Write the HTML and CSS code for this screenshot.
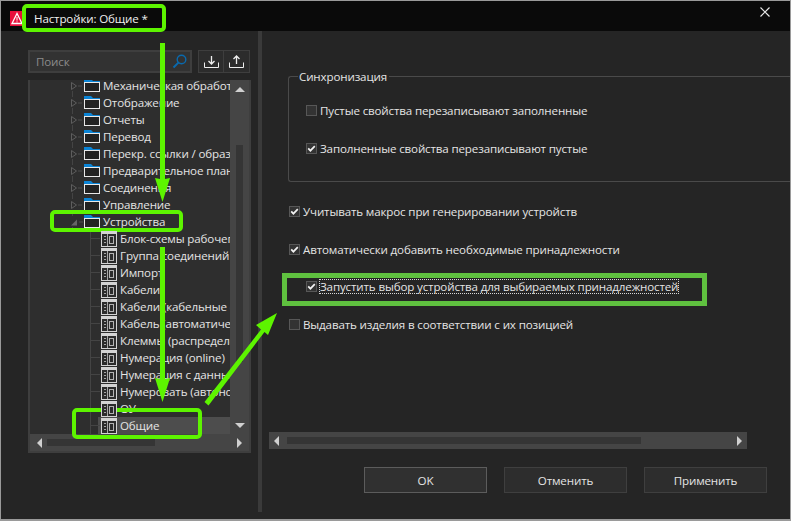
FILE: index.html
```html
<!DOCTYPE html>
<html lang="ru">
<head>
<meta charset="utf-8">
<title>Настройки: Общие *</title>
<link rel="stylesheet" href="styles.css">
</head>
<body>
<svg class="defs" width="0" height="0" aria-hidden="true">
  <symbol id="folder" viewBox="0 0 17 14">
    <path d="M0 0h7l2 2h7v2H0z" fill="#0a84d6"/>
    <rect x=".5" y="3.5" width="15" height="9" fill="#222" stroke="#e8e8e8"/>
  </symbol>
  <symbol id="closed" viewBox="0 0 14 14">
    <path d="M1.500 3.500v7l5-3.500z" fill="none" stroke="#5e5e5e"/>
    <path d="M8 7h4" stroke="#4c4c4c"/>
  </symbol>
  <symbol id="opened" viewBox="0 0 14 14">
    <path d="M1 10.500h6v-6z" fill="#666"/>
    <path d="M9 7h4" stroke="#4c4c4c"/>
  </symbol>
  <symbol id="form" viewBox="0 0 17 16">
    <rect width="16" height="16" fill="#d4d4d4"/>
    <rect x="1" y="3" width="14" height="12" fill="#2c2c2c"/>
    <path d="M3 5h2v1H3zM3 8h2v1H3zM3 11h2v1H3z" fill="#a8a8a8"/>
    <rect x="6" y="3" width="1" height="12" fill="#a8a8a8"/>
    <rect x="8.500" y="5.500" width="4" height="7" fill="none" stroke="#b4b4b4"/>
  </symbol>
  <symbol id="tick" viewBox="0 0 11 11">
    <path d="M2.200 5.400 4.400 7.700 8.800 3.200" fill="none" stroke="#f2f2f2" stroke-width="1.700"/>
  </symbol>
</svg>

<div class="window">
  <header class="titlebar">
    <svg class="logo" width="15" height="15" viewBox="0 0 15 15">
      <rect width="15" height="15" fill="#e8103c"/>
      <path d="M7 2.500 2 12.500h10z" fill="none" stroke="#fff" stroke-width="1.300"/>
      <path d="M7 6v3.600M7 10.400v1" stroke="#fff"/>
    </svg>
    <span class="title">Настройки: Общие *</span>
    <svg class="close" width="10" height="10" viewBox="0 0 10 10"><path d="M.5.5l9 9M9.500.5l-9 9" stroke="#e8e8e8" stroke-width="1.200"/></svg>
  </header>

  <div class="content">
    <aside class="left">
      <div class="toolbar">
        <div class="search">
          <span class="search-text">Поиск</span>
          <svg width="15" height="15" viewBox="0 0 15 15"><circle cx="9.500" cy="5.500" r="4.300" fill="none" stroke="#0a69ad" stroke-width="1.400"/><path d="M6.400 8.600 1.500 13.500" stroke="#0a69ad" stroke-width="2"/></svg>
        </div>
        <div class="tool-group">
          <button class="tool"><svg width="15" height="13" viewBox="0 0 15 13"><path d="M.5 7.500v5h14v-5" fill="none" stroke="#eee"/><path d="M7.500 1v7M4.500 6l3 3 3-3" fill="none" stroke="#eee" stroke-width="1.300"/></svg></button>
          <button class="tool"><svg width="15" height="13" viewBox="0 0 15 13"><path d="M.5 7.500v5h14v-5" fill="none" stroke="#eee"/><path d="M7.500 9V1.500M4.500 4l3-3 3 3" fill="none" stroke="#eee" stroke-width="1.300"/></svg></button>
        </div>
      </div>

      <div class="tree">
        <div class="tree-main">
          <ul class="tree-list">
            <li class="row parent first"><svg class="exp"><use href="#closed"/></svg><svg class="ic-folder"><use href="#folder"/></svg><span>Механическая обработка</span></li>
            <li class="row parent"><svg class="exp"><use href="#closed"/></svg><svg class="ic-folder"><use href="#folder"/></svg><span>Отображение</span></li>
            <li class="row parent"><svg class="exp"><use href="#closed"/></svg><svg class="ic-folder"><use href="#folder"/></svg><span>Отчеты</span></li>
            <li class="row parent"><svg class="exp"><use href="#closed"/></svg><svg class="ic-folder"><use href="#folder"/></svg><span>Перевод</span></li>
            <li class="row parent"><svg class="exp"><use href="#closed"/></svg><svg class="ic-folder"><use href="#folder"/></svg><span>Перекр. ссылки / образы</span></li>
            <li class="row parent"><svg class="exp"><use href="#closed"/></svg><svg class="ic-folder"><use href="#folder"/></svg><span>Предварительное планирование</span></li>
            <li class="row parent"><svg class="exp"><use href="#closed"/></svg><svg class="ic-folder"><use href="#folder"/></svg><span>Соединения</span></li>
            <li class="row parent"><svg class="exp"><use href="#closed"/></svg><svg class="ic-folder"><use href="#folder"/></svg><span>Управление</span></li>
            <li class="row parent"><svg class="exp"><use href="#opened"/></svg><svg class="ic-folder"><use href="#folder"/></svg><span>Устройства</span></li>
            <li class="row child"><svg class="ic-form"><use href="#form"/></svg><span>Блок-схемы рабочего</span></li>
            <li class="row child"><svg class="ic-form"><use href="#form"/></svg><span>Группа соединений</span></li>
            <li class="row child"><svg class="ic-form"><use href="#form"/></svg><span>Импорт</span></li>
            <li class="row child"><svg class="ic-form"><use href="#form"/></svg><span>Кабели</span></li>
            <li class="row child"><svg class="ic-form"><use href="#form"/></svg><span>Кабели (кабельные соединения)</span></li>
            <li class="row child"><svg class="ic-form"><use href="#form"/></svg><span>Кабель (автоматический)</span></li>
            <li class="row child"><svg class="ic-form"><use href="#form"/></svg><span>Клеммы (распределение)</span></li>
            <li class="row child"><svg class="ic-form"><use href="#form"/></svg><span>Нумерация (online)</span></li>
            <li class="row child"><svg class="ic-form"><use href="#form"/></svg><span>Нумерация с данными</span></li>
            <li class="row child"><svg class="ic-form"><use href="#form"/></svg><span>Нумеровать (автономно)</span></li>
            <li class="row child"><svg class="ic-form"><use href="#form"/></svg><span>ОУ</span></li>
            <li class="row child selected"><svg class="ic-form"><use href="#form"/></svg><span>Общие</span></li>
          </ul>
          <div class="vscroll">
            <i class="arrow up"></i>
            <div class="vtrack"><div class="vthumb"></div></div>
            <i class="arrow down"></i>
          </div>
        </div>
        <div class="hscroll tree-h">
          <i class="arrow left-a"></i>
          <div class="htrack"><div class="hthumb"></div></div>
          <i class="arrow right-a"></i>
        </div>
      </div>
    </aside>

    <div class="splitter"></div>

    <main class="right">
      <section class="group">
        <div class="legend"><span>Синхронизация</span></div>
        <label class="check"><i class="box"></i><span>Пустые свойства перезаписывают заполненные</span></label>
        <label class="check"><i class="box"><svg><use href="#tick"/></svg></i><span>Заполненные свойства перезаписывают пустые</span></label>
      </section>

      <div class="options">
        <label class="check"><i class="box"><svg><use href="#tick"/></svg></i><span>Учитывать макрос при генерировании устройств</span></label>
        <label class="check"><i class="box"><svg><use href="#tick"/></svg></i><span>Автоматически добавить необходимые принадлежности</span></label>
        <label class="check focused"><i class="box"><svg><use href="#tick"/></svg></i><span>Запустить выбор устройства для выбираемых принадлежностей</span></label>
        <label class="check"><i class="box"></i><span>Выдавать изделия в соответствии с их позицией</span></label>
      </div>

      <div class="hscroll main-h">
        <i class="arrow left-a"></i>
        <div class="htrack"><div class="hthumb"></div></div>
        <i class="arrow right-a"></i>
      </div>

      <footer class="buttons">
        <button class="btn default">OK</button>
        <button class="btn">Отменить</button>
        <button class="btn">Применить</button>
      </footer>
    </main>
  </div>

  <svg class="annot" width="791" height="521" viewBox="0 0 791 521" aria-hidden="true">
    <g fill="none" stroke="#5df400" stroke-width="4">
      <rect x="24" y="6" width="140" height="24" rx="3"/>
      <rect x="52" y="212" width="129" height="18" rx="3"/>
      <rect x="74" y="410" width="126" height="27" rx="3"/>
    </g>
    <rect x="284.500" y="275.500" width="420" height="28" fill="none" stroke="#5fc13f" stroke-width="5"/>
    <g fill="#5df400">
      <path d="M160 43h5v136l5-1-7.500 24-7.500-24 5 1z"/>
      <path d="M160 247h5v132l5-1-7.500 24-7.500-24 5 1z"/>
      <path d="M204.500 402 261 329.500 256 325 277 313 268 335 264.500 332 208.500 405.500z"/>
    </g>
  </svg>
</div>
</body>
</html>
```
FILE: styles.css
```css
* { box-sizing: border-box; }
html, body { margin: 0; padding: 0; }
body { width: 791px; height: 521px; overflow: hidden; background: #252525; font-family: "Open Sans", "Noto Sans", sans-serif; font-size: 11.6px; letter-spacing: -0.15px; color: #e4e4e4; }
.defs { position: absolute; }
ul { list-style: none; margin: 0; padding: 0; }
button { font: inherit; color: inherit; letter-spacing: inherit; }

.window { position: relative; width: 791px; height: 521px; border: 1px solid #9a9a9a; border-width: 1px 1px 2px 1px; display: flex; flex-direction: column; background: #252525; }
.annot { position: absolute; left: -1px; top: -1px; pointer-events: none; }

.titlebar { height: 30px; flex: none; background: #0a0a0a; display: flex; align-items: center; padding: 4px 20px 0 9px; }
.logo { flex: none; }
.title { margin-left: 9px; color: #f0f0f0; flex: 1; }
.close { flex: none; align-self: flex-start; margin-top: 2px; }

.content { flex: 1; display: flex; min-height: 0; }
.left { width: 257px; flex: none; padding: 19px 0 0 27px; }
.splitter { width: 4px; flex: none; background: #3a3a3a; height: 481px; }
.right { flex: 1; padding-top: 45px; display: flex; flex-direction: column; min-width: 0; }

.toolbar { display: flex; width: 222px; height: 23px; gap: 6px; }
.search { flex: 1; background: #323232; border: 2px solid #3e3e3e; display: flex; align-items: center; justify-content: space-between; padding: 0 3px 0 6px; }
.search-text { color: #8b8b8b; }
.tool-group { display: flex; }
.tool { width: 26px; height: 23px; padding: 0; background: #2c2c2c; border: 1px solid #3e3e3e; display: flex; align-items: center; justify-content: center; }
.tool + .tool { border-left: 0; }

.tree { width: 223px; height: 373px; margin-top: 7px; border: 2px solid #3e3e3e; border-top-width: 0; display: flex; flex-direction: column; }
.tree-main { flex: 1; display: flex; min-height: 0; }
.tree-list { flex: 1; min-width: 0; overflow: hidden; background: #2e2e2e; }
.row { height: 17px; display: flex; align-items: center; white-space: nowrap; position: relative; overflow: hidden; }
.row.first { margin-top: -3px; }
.parent::before { content: ""; position: absolute; left: 42px; top: 0; bottom: 0; width: 1px; background: #444; clip-path: polygon(0 0, 100% 0, 100% 3px, 0 3px, 0 14px, 100% 14px, 100% 100%, 0 100%); }
.child::before { content: ""; position: absolute; left: 60px; top: 0; bottom: 0; width: 1px; background: #444; }
.child::after { content: ""; position: absolute; left: 60px; top: 8px; width: 10px; height: 1px; background: #444; }
.exp { width: 14px; height: 14px; margin-left: 40px; flex: none; position: relative; }
.ic-folder { width: 17px; height: 14px; flex: none; }
.parent span { margin-left: 2px; }
.ic-form { width: 17px; height: 16px; margin-left: 71px; flex: none; position: relative; z-index: 1; }
.child span { margin-left: 2px; }
.selected { background: linear-gradient(to right, #2e2e2e 68px, #4d4d4d 68px); }

.vscroll { width: 19px; flex: none; background: #454545; display: flex; flex-direction: column; align-items: center; }
.vtrack { flex: 1; width: 7px; padding: 53px 0 61px; }
.vthumb { height: 100%; background: #353535; }
.arrow { display: block; width: 0; height: 0; flex: none; }
.up { margin-top: 7px; border: 5px solid transparent; border-top: 0; border-bottom: 5px solid #d0d0d0; }
.down { margin-bottom: 6px; border: 5px solid transparent; border-bottom: 0; border-top: 5px solid #d0d0d0; }
.left-a { border: 5px solid transparent; border-left: 0; border-right: 5px solid #d0d0d0; }
.right-a { border: 5px solid transparent; border-right: 0; border-left: 5px solid #d0d0d0; }

.hscroll { display: flex; align-items: center; background: #454545; flex: none; }
.tree-h { height: 17px; padding: 0 7px; }
.tree-h .htrack { flex: 1; margin: 0 5px; height: 7px; }
.tree-h .hthumb { width: 108px; height: 7px; background: #353535; }
.main-h { width: 478px; height: 17px; margin: 0 0 0 7px; padding: 0 5px; }
.main-h .htrack { flex: 1; margin: 0 8px 0 8px; height: 7px; }
.main-h .hthumb { width: 354px; height: 7px; background: #353535; }

.group { margin-left: 26px; height: 106px; border: 1px solid #4a4a4a; border-right: 0; border-radius: 3px 0 0 3px; padding-left: 17px; }
.legend { margin: -9px 0 17px -8px; height: 17px; }
.legend span { background: #252525; padding: 0 2px 0 1px; display: inline-block; height: 17px; line-height: 17px; }
.check { display: flex; align-items: center; height: 17px; white-space: nowrap; }
.group .check + .check { margin-top: 21px; }
.box { display: block; width: 11px; height: 11px; background: #333; border: 1px solid #575757; flex: none; position: relative; }
.box svg { position: absolute; left: -1px; top: -1px; width: 11px; height: 11px; }
.check span { margin-left: 2px; padding: 0 1px; }

.options { margin: 21px 0 0 27px; height: 229px; }
.options .check + .check { margin-top: 21px; }
.options .check.focused { margin-left: 17px; margin-top: 20px; }
.focused span { outline: 1px dotted #d8d8d8; outline-offset: -1px; }

.buttons { display: flex; gap: 17px; margin: 18px 0 0 102px; }
.btn { width: 123px; height: 26px; padding: 0; background: #2d2d2d; border: 1px solid #3f3f3f; }
.btn.default { border-color: #5c5c5c; background: #303030; }
```
